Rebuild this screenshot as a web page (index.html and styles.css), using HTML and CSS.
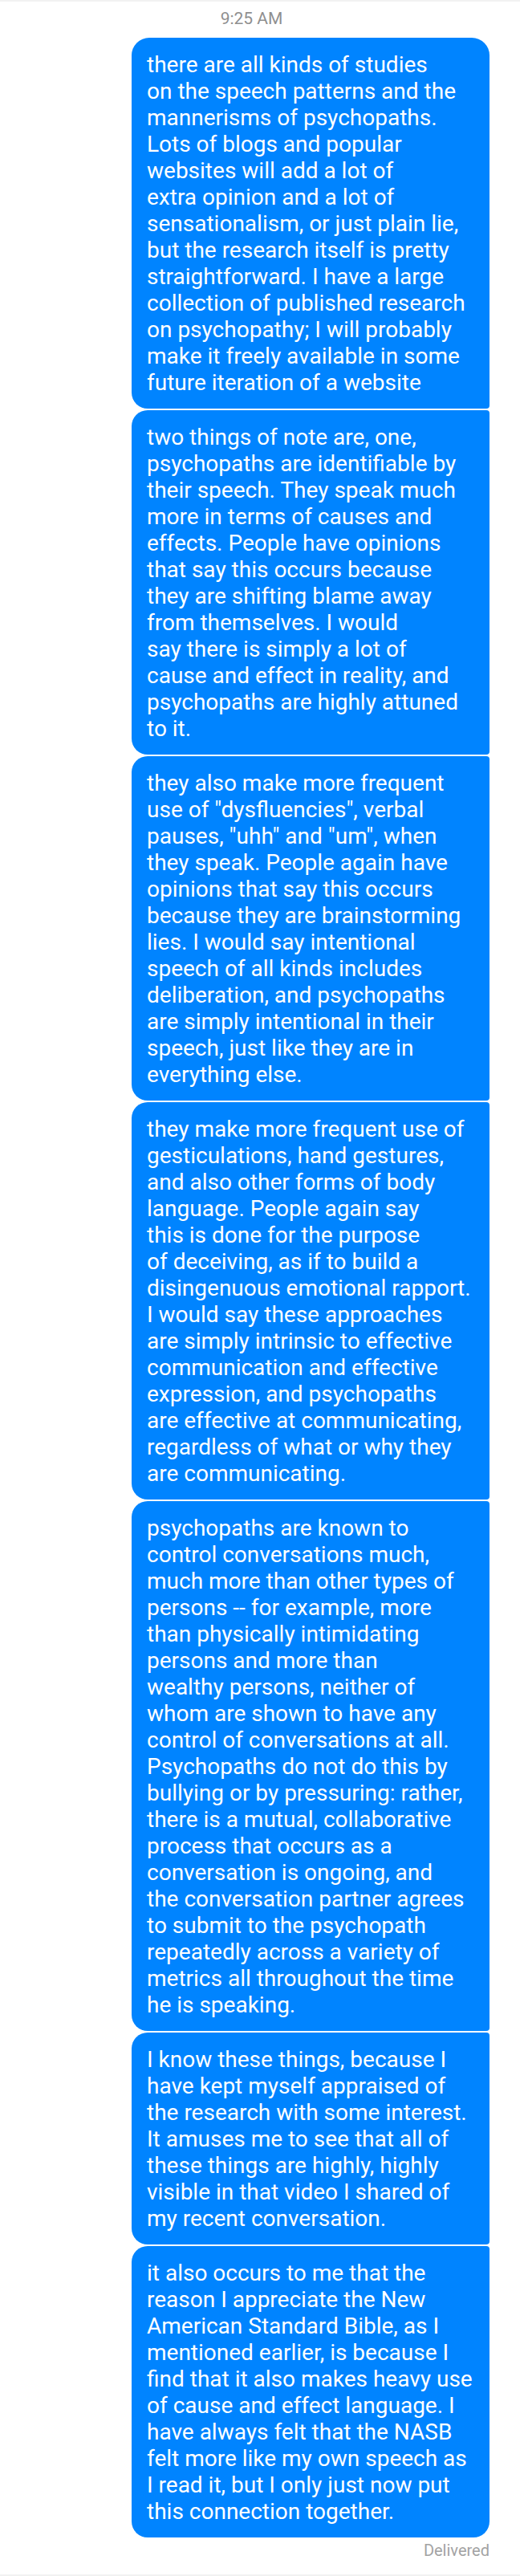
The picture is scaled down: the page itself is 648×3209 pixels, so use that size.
FILE: index.html
```html
<!DOCTYPE html>
<html>
<head>
<meta charset="utf-8">
<link rel="stylesheet" href="styles.css">
</head>
<body>
<div class="topline"></div>
<div class="time">9:25 AM</div>
<div class="thread">
  <div class="group">
    <div class="bubble first">there are all kinds of studies<br>on the speech patterns and the<br>mannerisms of psychopaths.<br>Lots of blogs and popular<br>websites will add a lot of<br>extra opinion and a lot of<br>sensationalism, or just plain lie,<br>but the research itself is pretty<br>straightforward. I have a large<br>collection of published research<br>on psychopathy; I will probably<br>make it freely available in some<br>future iteration of a website</div>
    <div class="bubble">two things of note are, one,<br>psychopaths are identifiable by<br>their speech. They speak much<br>more in terms of causes and<br>effects. People have opinions<br>that say this occurs because<br>they are shifting blame away<br>from themselves. I would<br>say there is simply a lot of<br>cause and effect in reality, and<br>psychopaths are highly attuned<br>to it.</div>
    <div class="bubble">they also make more frequent<br>use of "dysfluencies", verbal<br>pauses, "uhh" and "um", when<br>they speak. People again have<br>opinions that say this occurs<br>because they are brainstorming<br>lies. I would say intentional<br>speech of all kinds includes<br>deliberation, and psychopaths<br>are simply intentional in their<br>speech, just like they are in<br>everything else.</div>
    <div class="bubble">they make more frequent use of<br>gesticulations, hand gestures,<br>and also other forms of body<br>language. People again say<br>this is done for the purpose<br>of deceiving, as if to build a<br>disingenuous emotional rapport.<br>I would say these approaches<br>are simply intrinsic to effective<br>communication and effective<br>expression, and psychopaths<br>are effective at communicating,<br>regardless of what or why they<br>are communicating.</div>
    <div class="bubble">psychopaths are known to<br>control conversations much,<br>much more than other types of<br>persons -- for example, more<br>than physically intimidating<br>persons and more than<br>wealthy persons, neither of<br>whom are shown to have any<br>control of conversations at all.<br>Psychopaths do not do this by<br>bullying or by pressuring: rather,<br>there is a mutual, collaborative<br>process that occurs as a<br>conversation is ongoing, and<br>the conversation partner agrees<br>to submit to the psychopath<br>repeatedly across a variety of<br>metrics all throughout the time<br>he is speaking.</div>
    <div class="bubble">I know these things, because I<br>have kept myself appraised of<br>the research with some interest.<br>It amuses me to see that all of<br>these things are highly, highly<br>visible in that video I shared of<br>my recent conversation.</div>
    <div class="bubble last">it also occurs to me that the<br>reason I appreciate the New<br>American Standard Bible, as I<br>mentioned earlier, is because I<br>find that it also makes heavy use<br>of cause and effect language. I<br>have always felt that the NASB<br>felt more like my own speech as<br>I read it, but I only just now put<br>this connection together.</div>
  </div>
  <div class="status">Delivered</div>
</div>
<div class="bottomline"></div>
</body>
</html>
```
FILE: styles.css
```css
html, body {
  margin: 0;
  padding: 0;
  background: #ffffff;
}
body {
  width: 648px;
  height: 3209px;
  font-family: Roboto, "Liberation Sans", sans-serif;
  display: flex;
  flex-direction: column;
}
.topline {
  height: 2px;
  background: #f2f2f2;
}
.time {
  height: 45px;
  box-sizing: border-box;
  padding: 9px 21px 0 0;
  text-align: center;
  font-size: 21px;
  line-height: 24px;
  color: #8f8f8f;
}
.thread {
  flex: 1;
  display: flex;
  flex-direction: column;
  align-items: flex-end;
  padding-right: 38px;
}
.group {
  display: flex;
  flex-direction: column;
  gap: 2px;
}
.bubble {
  width: 446px;
  box-sizing: border-box;
  background: #0084ff;
  color: #ffffff;
  font-size: 28px;
  line-height: 33px;
  padding: 17px 10px 16px 19px;
  white-space: nowrap;
  border-radius: 20px 4px 4px 20px;
}
.bubble.first {
  border-radius: 22px 22px 4px 20px;
}
.bubble.last {
  border-radius: 20px 4px 20px 20px;
}
.status {
  font-size: 20px;
  line-height: 22px;
  color: #a3a3a3;
  margin-top: 5px;
}
.bottomline {
  height: 2px;
  background: #f2f2f2;
}
```
